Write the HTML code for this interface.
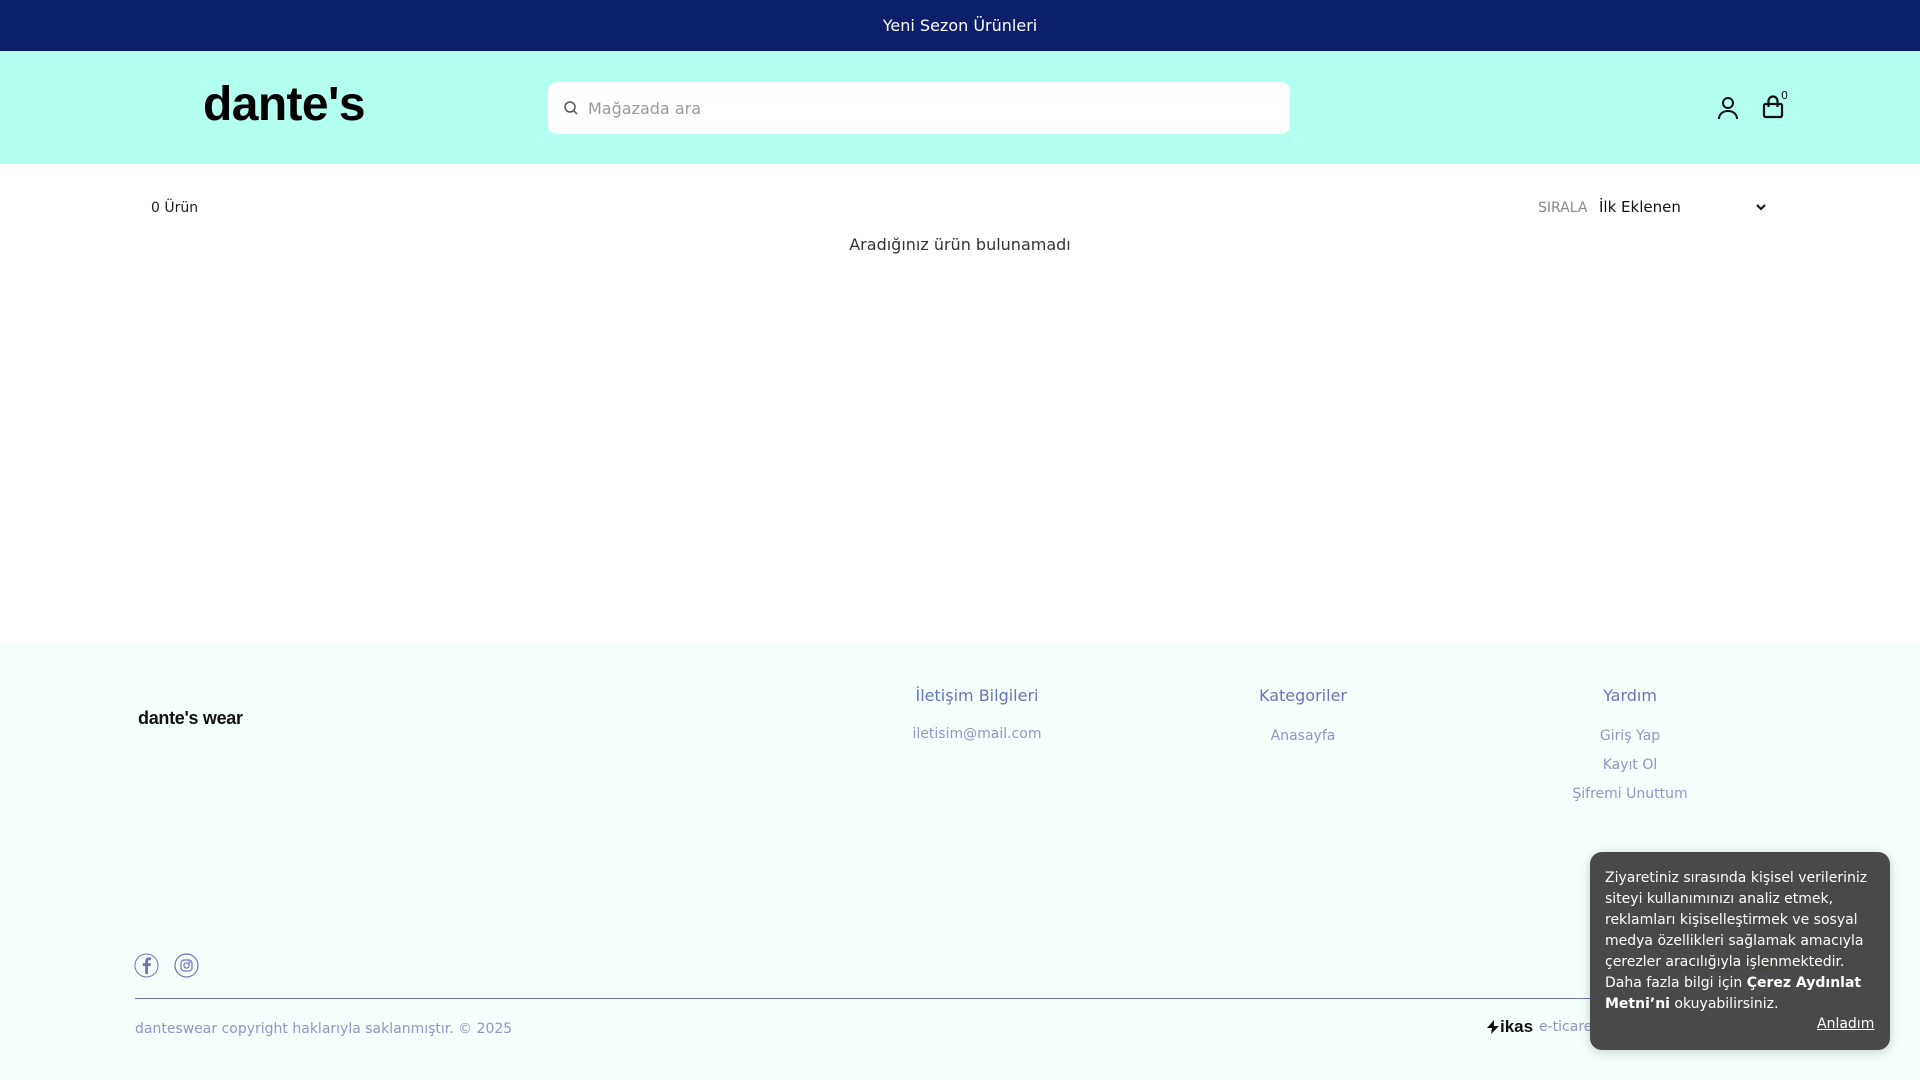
<!DOCTYPE html>
<html><head><meta charset="utf-8"><style>
*{margin:0;padding:0;box-sizing:border-box}
body{width:1920px;height:1080px;position:relative;overflow:hidden;font-family:"DejaVu Sans","Liberation Sans",sans-serif;background:#fff}
.a{position:absolute;white-space:nowrap}
</style></head><body>
<div class="a" style="left:0;top:0;width:1920px;height:51px;background:#0c1f6b"></div>
<div class="a" style="left:0;top:16px;width:1920px;text-align:center;color:#fff;font-size:16px">Yeni Sezon Ürünleri</div>
<div class="a" style="left:0;top:51px;width:1920px;height:113px;background:#b3fff0;border-bottom:1px solid #e6ece9"></div>
<div class="a" style="left:203px;top:77px;font-family:'Liberation Sans',sans-serif;font-weight:bold;font-size:48px;letter-spacing:-0.6px;color:#000">dante's</div>
<div class="a" style="left:548px;top:82px;width:742px;height:52px;background:#fff;border-radius:9px"></div>
<svg class="a" style="left:563px;top:100px" width="16" height="16" viewBox="0 0 16 16" fill="none" stroke="#555" stroke-width="1.5"><circle cx="7" cy="7" r="5"/><path d="M11 11l3 3"/></svg>
<div class="a" style="left:588px;top:99px;font-size:16px;color:#999">Mağazada ara</div>
<svg class="a" style="left:1717px;top:96px" width="22" height="24" viewBox="0 0 22 24" fill="none" stroke="#111" stroke-width="2"><circle cx="11" cy="7" r="5"/><path d="M2 23c0-5 4-8 9-8s9 3 9 8"/></svg>
<svg class="a" style="left:1762px;top:95px" width="22" height="24" viewBox="0 0 22 24" fill="none" stroke="#111" stroke-width="2.2"><rect x="2" y="9" width="18" height="13" rx="1.5"/><path d="M6.5 12V6a4.5 4.5 0 0 1 9 0v6"/></svg>
<div class="a" style="left:1781px;top:89px;font-size:11px;color:#111">0</div>
<div class="a" style="left:151px;top:200px;font-size:14px;color:#222">0 Ürün</div>
<div class="a" style="left:1538px;top:200px;font-size:14px;color:#888">SIRALA</div>
<div class="a" style="left:1599px;top:198px;font-size:15px;color:#111">İlk Eklenen</div>
<svg class="a" style="left:1755px;top:202px" width="12" height="10" viewBox="0 0 12 10" fill="none" stroke="#111" stroke-width="2"><path d="M2 3l4 4 4-4"/></svg>
<div class="a" style="left:0;top:235px;width:1920px;text-align:center;font-size:16px;color:#333">Aradığınız ürün bulunamadı</div>
<div class="a" style="left:0;top:643px;width:1920px;height:437px;background:#f5fffb"></div>
<div class="a" style="left:138px;top:708px;font-family:'Liberation Sans',sans-serif;font-weight:bold;font-size:18px;letter-spacing:-0.3px;color:#111">dante's wear</div>
<div class="a" style="left:877px;top:686px;width:200px;text-align:center;font-size:16px;color:#6b74b8">İletişim Bilgileri</div>
<div class="a" style="left:877px;top:726px;width:200px;text-align:center;font-size:14px;color:#8f96c8">iletisim@mail.com</div>
<div class="a" style="left:1203px;top:686px;width:200px;text-align:center;font-size:16px;color:#6b74b8">Kategoriler</div>
<div class="a" style="left:1203px;top:728px;width:200px;text-align:center;font-size:14px;color:#8f96c8">Anasayfa</div>
<div class="a" style="left:1530px;top:686px;width:200px;text-align:center;font-size:16px;color:#6b74b8">Yardım</div>
<div class="a" style="left:1530px;top:728px;width:200px;text-align:center;font-size:14px;color:#8f96c8">Giriş Yap</div>
<div class="a" style="left:1530px;top:757px;width:200px;text-align:center;font-size:14px;color:#8f96c8">Kayıt Ol</div>
<div class="a" style="left:1530px;top:786px;width:200px;text-align:center;font-size:14px;color:#8f96c8">Şifremi Unuttum</div>
<svg class="a" style="left:134px;top:953px" width="25" height="25" viewBox="0 0 25 25" fill="none" stroke="#6b74b8" stroke-width="1"><circle cx="12.5" cy="12.5" r="11.5"/><path d="M14 21v-8h2.5l.4-2.8H14V8.5c0-.8.3-1.4 1.4-1.4H17V4.6c-.3 0-1.2-.1-2.2-.1-2.2 0-3.600 1.3-3.6 3.7v2H8.8V13h2.4v8" fill="#6b74b8" stroke="none"/></svg>
<svg class="a" style="left:174px;top:953px" width="25" height="25" viewBox="0 0 25 25" fill="none" stroke="#6b74b8" stroke-width="1.2"><circle cx="12.5" cy="12.5" r="11.5"/><rect x="7" y="7" width="11" height="11" rx="3"/><circle cx="12.5" cy="12.5" r="2.6"/><circle cx="15.6" cy="9.4" r=".5" fill="#6b74b8"/></svg>
<div class="a" style="left:1670px;top:958px;font-weight:bold;font-size:12px;color:#1a1f71;font-style:italic">VISA</div>
<div class="a" style="left:1712px;top:958px;width:14px;height:14px;border-radius:50%;background:#c00"></div>
<div class="a" style="left:1720px;top:958px;width:14px;height:14px;border-radius:50%;background:#0a6ab0;opacity:.8"></div>
<div class="a" style="left:1753px;top:958px;width:14px;height:14px;border-radius:50%;background:#e00"></div>
<div class="a" style="left:1761px;top:958px;width:14px;height:14px;border-radius:50%;background:#f90;opacity:.8"></div>
<div class="a" style="left:135px;top:998px;width:1650px;height:1px;background:#6b74b8"></div>
<div class="a" style="left:135px;top:1021px;font-size:14px;color:#8f96c8">danteswear copyright haklarıyla saklanmıştır. © 2025</div>
<svg class="a" style="left:1487px;top:1020px" width="12" height="14" viewBox="0 0 12 14"><path d="M7 0L0 8h5l-1 6 8-8H7z" fill="#111"/></svg>
<div class="a" style="left:1500px;top:1017px;font-family:'Liberation Sans',sans-serif;font-weight:bold;font-size:17px;color:#111">ikas</div>
<div class="a" style="left:1539px;top:1019px;font-size:14px;color:#8f96c8">e-ticaret altyapısı ile hazırlanmıştır.</div>
<div class="a" style="left:1590px;top:852px;width:300px;height:198px;background:#434443;border-radius:12px;box-shadow:0 2px 12px rgba(0,0,0,.2);opacity:.97"></div>
<div class="a" style="left:1605px;top:868px;width:280px;white-space:normal;font-size:14px;line-height:21px;color:#fff">Ziyaretiniz sırasında kişisel verileriniz siteyi kullanımınızı analiz etmek, reklamları kişiselleştirmek ve sosyal medya özellikleri sağlamak amacıyla çerezler aracılığıyla işlenmektedir. Daha fazla bilgi için <b>Çerez Aydınlat Metni’ni</b> okuyabilirsiniz.</div>
<div class="a" style="left:1817px;top:1016px;font-size:14px;color:#fff;text-decoration:underline">Anladım</div>
</body></html>
